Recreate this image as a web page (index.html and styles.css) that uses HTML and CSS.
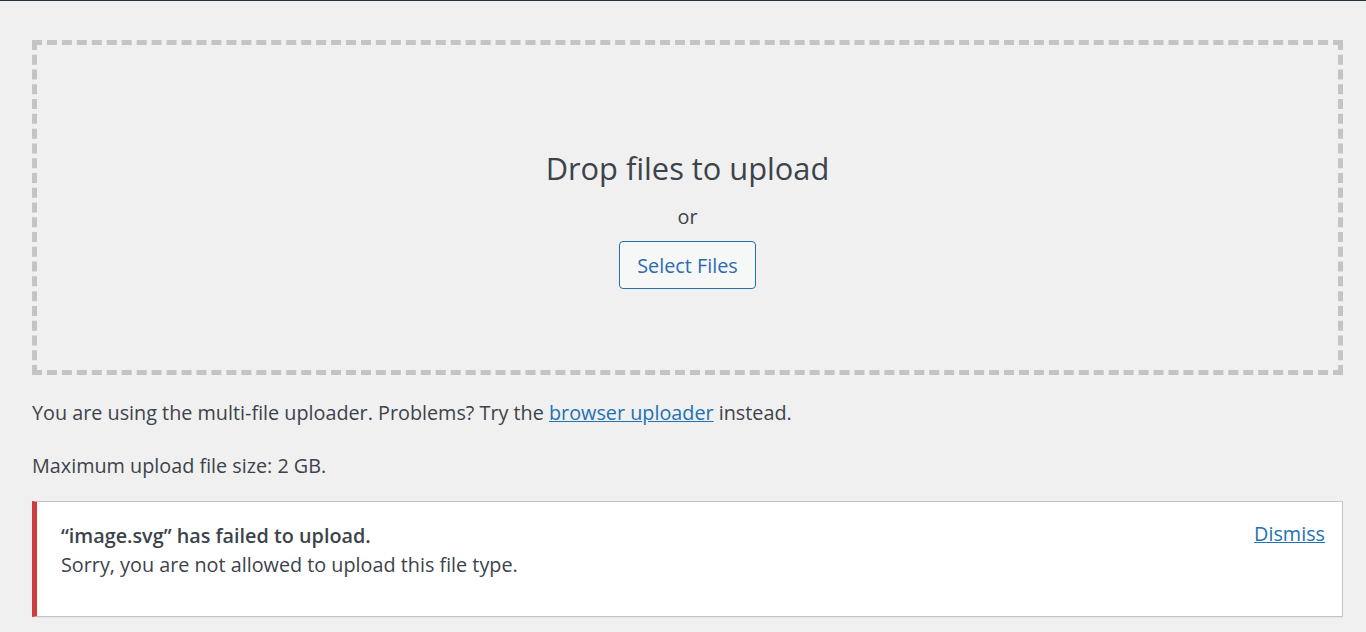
FILE: index.html
```html
<!DOCTYPE html>
<html lang="en">
<head>
<meta charset="utf-8">
<title>Upload New Media</title>
<link rel="stylesheet" href="styles.css">
</head>
<body>
<div class="page">
  <div class="drop-area">
    <div class="drop-inside">
      <p class="drop-info">Drop files to upload</p>
      <p class="drop-or">or</p>
      <button class="select-btn" type="button">Select Files</button>
    </div>
  </div>
  <p class="info">You are using the multi-file uploader. Problems? Try the <a href="#" class="link">browser uploader</a> instead.</p>
  <p class="info max">Maximum upload file size: 2 GB.</p>
  <div class="notice">
    <div class="notice-text">
      <strong class="notice-title">“image.svg” has failed to upload.</strong>
      <span class="notice-msg">Sorry, you are not allowed to upload this file type.</span>
    </div>
    <a href="#" class="link dismiss">Dismiss</a>
  </div>
</div>
</body>
</html>
```
FILE: styles.css
```css
html, body {
  margin: 0;
  padding: 0;
}
body {
  background: #f0f0f1;
  color: #3c434a;
  font-family: "Open Sans", "Noto Sans", "Liberation Sans", sans-serif;
  font-size: 19.8px;
  border-top: 1px solid #2c3338;
  height: 631px;
  overflow: hidden;
}
.page {
  padding: 39px 23px 0 32px;
}
.drop-area {
  border: 5px dashed #c3c4c7;
  height: 325px;
  display: flex;
  align-items: center;
  justify-content: center;
}
.drop-inside {
  display: flex;
  flex-direction: column;
  align-items: center;
  margin-top: 22px;
}
.drop-info {
  margin: 0;
  font-size: 30.8px;
  line-height: 40px;
  color: #3c434a;
}
.drop-or {
  margin: 15px 0 0;
  line-height: 28px;
}
.select-btn {
  margin-top: 10px;
  width: 137px;
  height: 48px;
  border: 1px solid #2271b1;
  border-radius: 4px;
  background: #f6f7f7;
  color: #2c6bb0;
  font-family: inherit;
  font-size: 19.8px;
  padding: 0;
}
.info {
  margin: 0;
  line-height: 28px;
}
.info:first-of-type {
  margin-top: 24px;
}
.max {
  margin-top: 25px;
}
.link {
  color: #2271b1;
  text-decoration: underline;
}
.notice {
  margin-top: 21px;
  background: #fff;
  border: 1px solid #c3c4c7;
  border-left: 5px solid #d03b3b;
  box-shadow: 0 1px 1px rgba(0,0,0,.04);
  display: flex;
  justify-content: space-between;
  align-items: flex-start;
  padding: 0 17px 0 24px;
  box-sizing: border-box;
  height: 116px;
}
.notice-text {
  display: flex;
  flex-direction: column;
  padding-top: 19px;
}
.notice-title {
  font-weight: 600;
  line-height: 29px;
}
.notice-msg {
  line-height: 29px;
}
.dismiss {
  margin-top: 17px;
  line-height: 29px;
}
```
